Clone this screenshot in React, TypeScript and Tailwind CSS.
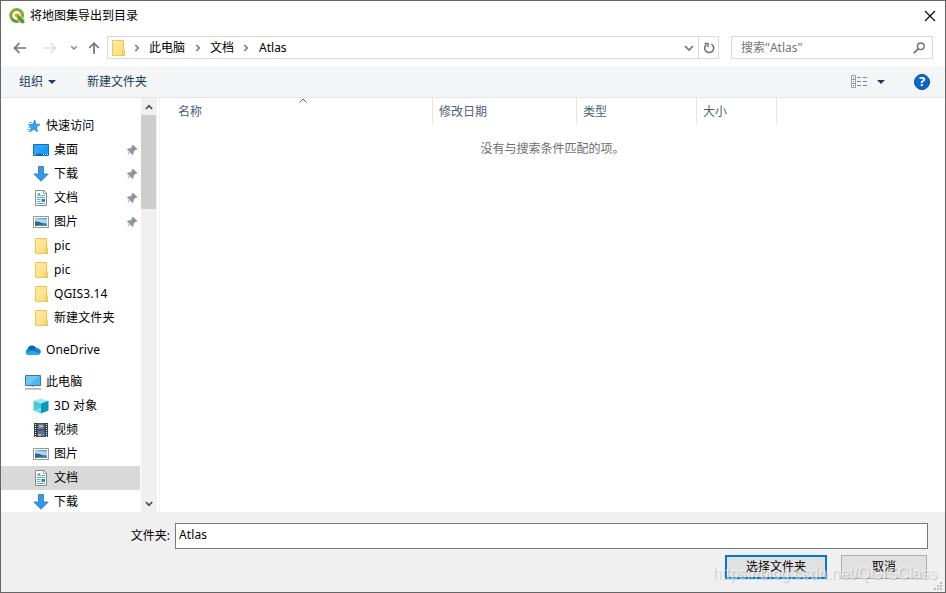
import React from 'react';

type IconProps = { className?: string };

const FolderIcon = ({ className = '' }: IconProps) => (
  <svg viewBox="0 0 16 16" className={`h-4 w-4 shrink-0 ${className}`}>
    <defs>
      <linearGradient id="folder" x1="0" y1="0" x2="1" y2="1">
        <stop offset="0" stopColor="#ffeaa3" />
        <stop offset="1" stopColor="#ffdc7a" />
      </linearGradient>
    </defs>
    <path d="M2.500.5h11v9.500l1 1v4.500h-12z" fill="url(#folder)" stroke="#ecc64f" />
    <path d="M12.500 15.500v-5l1-1.500 1 1.500v5z" fill="#ffe08a" stroke="#e6bd45" strokeWidth=".8" />
  </svg>
);

const QgisIcon = () => (
  <svg viewBox="0 0 16 16" className="h-4 w-4 shrink-0">
    <circle cx="7.700" cy="7.500" r="5.900" fill="none" stroke="#7cb02f" strokeWidth="3" />
    <path d="M2.800 10.500a5.900 5.900 0 0 0 6 2.800" fill="none" stroke="#5f9a31" strokeWidth="2.400" />
    <path d="M8 8.200l2-1.600 5.800 5.600v3.500h-3.300L8 11.200z" fill="#5a9a32" stroke="#fff" strokeWidth=".8" />
    <path d="M5.800 5.800h3.800l1.400 1.500-2 .7-.8 2-2.400-2z" fill="#f08a2c" />
  </svg>
);

const StarIcon = () => (
  <svg viewBox="0 0 16 16" className="h-4 w-4 shrink-0">
    <path d="M9.800 2l1 4.200 4.200.2-3.600 2.700 1 4.400-3.700-2.300-3.500 2.600 1-4.500L3.500 6.700l4.500-.4z" fill="#2fa4f0" stroke="#1785d6" strokeWidth=".8" />
    <path d="M4 4.500h3M3 6.500h2.500M3 9.500h3M2 11.500h3M3 13.500h2" stroke="#58b1ea" strokeWidth=".8" />
  </svg>
);

const DesktopIcon = () => (
  <svg viewBox="0 0 16 16" className="h-4 w-4 shrink-0">
    <path d="M.5 2.500h15v11H.5z" fill="#1a9bf5" stroke="#0b6fc4" />
    <path d="M1 3h14L4 12H1z" fill="#38aeff" opacity=".6" />
    <path d="M1 12.500h14" stroke="#0a5ca8" />
    <path d="M1.500 12.500h1M10 12.500h1M12 12.500h1M14 12.500h1" stroke="#fff" />
  </svg>
);

const DownloadIcon = () => (
  <svg viewBox="0 0 16 16" className="h-4 w-4 shrink-0">
    <path d="M5.500.5h5V8h4.700L8 15.300.8 8h4.700z" fill="#3896e8" stroke="#2478c6" strokeWidth=".8" />
  </svg>
);

const DocumentIcon = () => (
  <svg viewBox="0 0 16 16" className="h-4 w-4 shrink-0">
    <path d="M2.500.5h8.500l2.500 2.500v12.500h-11z" fill="#fff" stroke="#858b90" />
    <path d="M10.500.5v3h3" fill="none" stroke="#858b90" strokeWidth=".8" />
    <path d="M4.300 6.200L6 3l1.500 3.200M5 5h2" fill="none" stroke="#2787c5" strokeWidth=".8" />
    <path d="M8.500 5.500H12M4 7.500h8M4 9.500h3.500M4 11.500h3.500M4 13.500h8" stroke="#62a8d4" />
    <path d="M8.500 9H12v2.800H8.500z" fill="#1780c2" />
  </svg>
);

const PictureIcon = () => (
  <svg viewBox="0 0 16 16" className="h-4 w-4 shrink-0">
    <path d="M.5 2.500h15v11H.5z" fill="#fff" stroke="#92989c" />
    <path d="M2 4h12v8H2z" fill="#a9d5f3" />
    <path d="M2 4h12v1.800L7 5z" fill="#62a9e0" />
    <path d="M2 7.500l3.500.2L9 9l5 .8V12H2z" fill="#2f6a70" />
    <path d="M2 12l4-1.300 8-.7v2z" fill="#5789ab" />
  </svg>
);

const CloudIcon = () => (
  <svg viewBox="0 0 16 16" className="h-4 w-4 shrink-0">
    <path d="M3.400 13A3.300 3.300 0 0 1 2.900 6.700 4.600 4.600 0 0 1 11.300 6.300 3.500 3.500 0 0 1 12.800 13z" fill="#1490df" />
    <path d="M2.600 6.900A4.600 4.600 0 0 1 11.300 6.300L7.500 9.200z" fill="#0a64b8" />
    <path d="M11.300 6.300A3.500 3.500 0 0 1 15 11.800L7.300 8.500z" fill="#1583d8" />
    <path d="M.9 11.800L7.300 8.500l7.700 3.300c-.5.800-1.300 1.200-2.200 1.200H3.400c-1 0-1.900-.5-2.500-1.200z" fill="#28a8ea" />
  </svg>
);

const ComputerIcon = () => (
  <svg viewBox="0 0 16 16" className="h-4 w-4 shrink-0">
    <path d="M.5 1.500h15v10H.5z" fill="#4db7f7" stroke="#38789f" />
    <path d="M1 2h13L4 11H1z" fill="#85d0ff" opacity=".65" />
    <path d="M7 12h2v1H7z" fill="#a9bac8" />
    <path d="M0 14.900h16" stroke="#8797a8" strokeWidth="1.200" />
  </svg>
);

const CubeIcon = () => (
  <svg viewBox="0 0 16 16" className="h-4 w-4 shrink-0">
    <path d="M8 .5l7.500 2.200L8 5.500.5 2.700z" fill="#a2e8f0" />
    <path d="M.5 2.700L8 5.500v10L.5 12.500z" fill="#4bc8dc" />
    <path d="M15.500 2.700L8 5.500v10l7.500-3z" fill="#0799b5" />
    <path d="M.5 12.500L8 9.500v6z" fill="#7fdbe7" />
  </svg>
);

const VideoIcon = () => (
  <svg viewBox="0 0 16 16" className="h-4 w-4 shrink-0">
    <path d="M1 1h14v14H1z" fill="#34383b" />
    <path d="M4.500 1.500h7v6h-7zM4.500 8.500h7v6h-7z" fill="#3775d3" />
    <path d="M2.500 2v13M13.500 2v13" stroke="#e6e6e6" strokeWidth="1.200" strokeDasharray="1 1" />
    <path d="M6 3h4v2.500H6zM5 12h3v2H5z" fill="#e9b52e" />
    <path d="M8.500 5H11v2H8.500zM5 9.500h2v1H5z" fill="#d84d3a" />
    <path d="M4.500 6H7v1H4.500zM9 11.500h2.500v2H9z" fill="#4da758" />
  </svg>
);

const PinIcon = () => (
  <svg viewBox="0 0 12 12" className="h-3 w-3 shrink-0">
    <path d="M7 .8l4.400 4.300-1.100 1-.8-.3-2 2.200.2 2-1.100 1L4 8.500.8 11.600 3.300 7.800.9 5.400l1-1 2.100.2 2.100-2-.2-.8z" fill="#8c99a3" />
  </svg>
);

const Chevron = ({ className = '' }: IconProps) => (
  <svg viewBox="0 0 6 8" className={`h-2 w-1.5 shrink-0 ${className}`}>
    <path d="M1.300 1l3 3-3 3" fill="none" stroke="#747474" strokeWidth="1.500" />
  </svg>
);

const Triangle = () => (
  <svg viewBox="0 0 8 4" className="h-1 w-2 shrink-0">
    <path d="M0 0h8L4 4z" fill="#1f3c66" />
  </svg>
);

type Item = { label: string; icon: React.ReactNode; pinned?: boolean; active?: boolean };

const quickAccess: Item[] = [
  { label: '桌面', icon: <DesktopIcon />, pinned: true },
  { label: '下载', icon: <DownloadIcon />, pinned: true },
  { label: '文档', icon: <DocumentIcon />, pinned: true },
  { label: '图片', icon: <PictureIcon />, pinned: true },
  { label: 'pic', icon: <FolderIcon /> },
  { label: 'pic', icon: <FolderIcon /> },
  { label: 'QGIS3.14', icon: <FolderIcon /> },
  { label: '新建文件夹', icon: <FolderIcon /> },
];

const thisPC: Item[] = [
  { label: '3D 对象', icon: <CubeIcon /> },
  { label: '视频', icon: <VideoIcon /> },
  { label: '图片', icon: <PictureIcon /> },
  { label: '文档', icon: <DocumentIcon />, active: true },
  { label: '下载', icon: <DownloadIcon /> },
];

const TreeRoot = ({ label, icon, className = '' }: { label: string; icon: React.ReactNode; className?: string }) => (
  <div className={`flex h-6 shrink-0 items-center gap-[5px] pl-6 tracking-[0.1px] ${className}`}>
    {icon}
    <span>{label}</span>
  </div>
);

const TreeItem = ({ label, icon, pinned, active }: Item) => (
  <div className={`flex h-6 shrink-0 items-center gap-[5px] pr-0.5 pl-8 tracking-[0.1px] ${active ? 'bg-[#d9d9d9]' : ''}`}>
    {icon}
    <span className="flex-1">{label}</span>
    {pinned && <PinIcon />}
  </div>
);

function TitleBar() {
  return (
    <div className="flex h-[29px] shrink-0 items-center pr-[9px] pl-2">
      <QgisIcon />
      <span className="ml-[5px] flex-1">将地图集导出到目录</span>
      <svg viewBox="0 0 12 12" className="h-3 w-3">
        <path d="M1 1l10 10M11 1L1 11" stroke="#000" strokeWidth="1.100" />
      </svg>
    </div>
  );
}

function AddressBar() {
  return (
    <div className="flex h-9 shrink-0 items-start pt-[6px] pr-3">
      <div className="flex h-6 items-center">
        <svg viewBox="0 0 14 12" className="ml-3 h-3 w-3.5">
          <path d="M13 6H2M6.500 1L1.500 6l5 5" fill="none" stroke="#747474" strokeWidth="1.700" />
        </svg>
        <svg viewBox="0 0 14 12" className="ml-4 h-3 w-3.5">
          <path d="M1 6h11M7.500 1l5 5-5 5" fill="none" stroke="#dedede" strokeWidth="1.700" />
        </svg>
        <svg viewBox="0 0 8 6" className="ml-[13px] h-1.5 w-2">
          <path d="M1.200 1.200L4 4l2.800-2.800" fill="none" stroke="#8a8a8a" strokeWidth="1.500" />
        </svg>
        <svg viewBox="0 0 12 12" className="ml-[10px] h-3 w-3">
          <path d="M6 12V1.500M1.200 6L6 1.200 10.800 6" fill="none" stroke="#747474" strokeWidth="1.700" />
        </svg>
      </div>
      <div className="ml-[7px] flex h-[23px] w-[612px] items-center border border-[#d9d9d9]">
        <FolderIcon className="ml-0.5" />
        <Chevron className="ml-2" />
        <span className="ml-[9px]">此电脑</span>
        <Chevron className="ml-[10px]" />
        <span className="ml-[9px]">文档</span>
        <Chevron className="ml-[9px]" />
        <span className="ml-[10px] flex-1">Atlas</span>
        <svg viewBox="0 0 10 8" className="mr-1 h-2 w-2.5">
          <path d="M1 2l4 4 4-4" fill="none" stroke="#747474" strokeWidth="1.700" />
        </svg>
        <div className="flex h-full w-5 items-center justify-center border-l border-[#d9d9d9]">
          <svg viewBox="0 0 12 12" className="h-3 w-3">
            <path d="M8.300 2.100A4.500 4.500 0 1 1 3.300 2.600" fill="none" stroke="#747474" strokeWidth="1.600" />
            <path d="M1.500 1.500H5V5" fill="none" stroke="#747474" strokeWidth="1.500" />
          </svg>
        </div>
      </div>
      <div className="ml-3 flex h-[23px] w-[202px] items-center border border-[#d9d9d9] pr-[7px] pl-[9px] text-[#757575]">
        <span className="flex-1">搜索"Atlas"</span>
        <svg viewBox="0 0 12 12" className="h-3 w-3">
          <circle cx="7.800" cy="4.200" r="3.300" fill="none" stroke="#747474" strokeWidth="1.500" />
          <path d="M5.400 6.600L.8 11.200" stroke="#747474" strokeWidth="1.900" />
        </svg>
      </div>
    </div>
  );
}

function Toolbar() {
  return (
    <div className="flex h-8 shrink-0 items-center border-b border-[#e5e5e5] bg-[#f4f5f7] pr-[15px] pl-[18px] text-[#1e395b]">
      <span>组织</span>
      <span className="ml-[5px]"><Triangle /></span>
      <span className="ml-[31px] flex-1">新建文件夹</span>
      <svg viewBox="0 0 16 14" className="h-3.5 w-4">
        <path d="M.5.5h4v12h-4zM.5 4.500h4M.5 8.500h4" fill="#fff" stroke="#9b9b9b" />
        <path d="M2 2.500h1" stroke="#777" />
        <path d="M2 6.500h1" stroke="#3086d0" />
        <path d="M2 10.500h1" stroke="#c5342b" />
        <path d="M6 2.500h4M12 2.500h4M6 6.500h4M12 6.500h4M6 10.500h4M12 10.500h4" stroke="#848484" />
      </svg>
      <span className="ml-[10px]"><Triangle /></span>
      <span className="ml-[29px] flex h-4 w-4 items-center justify-center rounded-full border border-[#064f9b] bg-[#0868c9] text-[13px] leading-none font-bold text-white">?</span>
    </div>
  );
}

function Sidebar() {
  return (
    <div className="flex w-[156px] shrink-0 overflow-hidden">
      <div className="flex w-[139px] flex-col overflow-hidden pt-4">
        <TreeRoot label="快速访问" icon={<StarIcon />} />
        {quickAccess.map((item, i) => (
          <TreeItem key={i} {...item} />
        ))}
        <TreeRoot label="OneDrive" icon={<CloudIcon />} className="mt-2" />
        <TreeRoot label="此电脑" icon={<ComputerIcon />} className="mt-2" />
        {thisPC.map((item) => (
          <TreeItem key={item.label} {...item} />
        ))}
      </div>
      <div className="ml-px flex w-4 flex-col bg-[#f0f0f0]">
        <div className="flex h-[17px] w-[15px] items-center justify-center">
          <svg viewBox="0 0 8 6" className="h-1.5 w-2">
            <path d="M.8 5L4 1.800 7.200 5" fill="none" stroke="#505050" strokeWidth="1.700" />
          </svg>
        </div>
        <div className="h-[94px] w-[15px] bg-[#cdcdcd]" />
        <div className="mt-auto flex h-[17px] w-[15px] items-center justify-center">
          <svg viewBox="0 0 8 6" className="h-1.5 w-2">
            <path d="M.8 1L4 4.200 7.200 1" fill="none" stroke="#505050" strokeWidth="1.700" />
          </svg>
        </div>
      </div>
    </div>
  );
}

function FileList() {
  return (
    <div className="ml-0.5 flex-1 border-l border-[#f3f3f3]">
      <div className="flex h-[27px] text-[#4c607a]">
        <div className="relative flex w-[273px] items-center border-r border-[#e5e5e5] pl-[18px]">
          名称
          <svg viewBox="0 0 8 5" className="absolute top-0 left-[139px] h-[5px] w-2">
            <path d="M.5 4.500L4 1l3.500 3.500" fill="none" stroke="#606060" />
          </svg>
        </div>
        <div className="flex w-36 items-center border-r border-[#e5e5e5] pl-1.5">修改日期</div>
        <div className="flex w-[120px] items-center border-r border-[#e5e5e5] pl-1.5">类型</div>
        <div className="flex w-20 items-center border-r border-[#e5e5e5] pl-1.5">大小</div>
      </div>
      <div className="mt-4 text-center text-[#6d6d6d]">没有与搜索条件匹配的项。</div>
    </div>
  );
}

function Footer() {
  return (
    <div className="relative flex h-20 shrink-0 flex-col bg-[#f0f0f0] pt-[11px] pr-[17px]">
      <div className="flex h-[26px] items-center">
        <label htmlFor="folder-name" className="w-[169px] text-right">文件夹:</label>
        <input
          id="folder-name"
          defaultValue="Atlas"
          className="ml-[5px] h-full flex-1 border border-[#7a7a7a] bg-white px-[3px] pb-[3px] tracking-[0.1px] outline-none"
        />
      </div>
      <div className="mt-1.5 flex justify-end gap-3.5 pr-px">
        <button className="h-6 w-[102px] border-2 border-[#0078d7] bg-[#e1e1e1]">选择文件夹</button>
        <button className="h-6 w-[86px] border border-[#adadad] bg-[#e1e1e1]">取消</button>
      </div>
      <span className="pointer-events-none absolute right-[8px] bottom-[8px] font-['Liberation_Sans',sans-serif] text-base leading-5 tracking-[-0.1px] whitespace-nowrap text-white/60 [text-shadow:1px_1px_1px_rgba(0,0,0,0.18)]">
        https://blog.csdn.net/QGISClass
      </span>
      <svg viewBox="0 0 8 8" className="absolute right-[3px] bottom-[2px] h-2 w-2">
        <path d="M6 0h2v2H6zM3 3h2v2H3zM6 3h2v2H6zM0 6h2v2H0zM3 6h2v2H3zM6 6h2v2H6z" fill="#bcbcbc" />
      </svg>
    </div>
  );
}

export default function App() {
  return (
    <div className="flex h-[593px] w-[946px] flex-col overflow-hidden border border-[#666] bg-white font-['Noto_Sans','Noto_Sans_CJK_SC',sans-serif] text-xs leading-4 text-black">
      <TitleBar />
      <AddressBar />
      <Toolbar />
      <div className="flex min-h-0 flex-1">
        <Sidebar />
        <FileList />
      </div>
      <Footer />
    </div>
  );
}
